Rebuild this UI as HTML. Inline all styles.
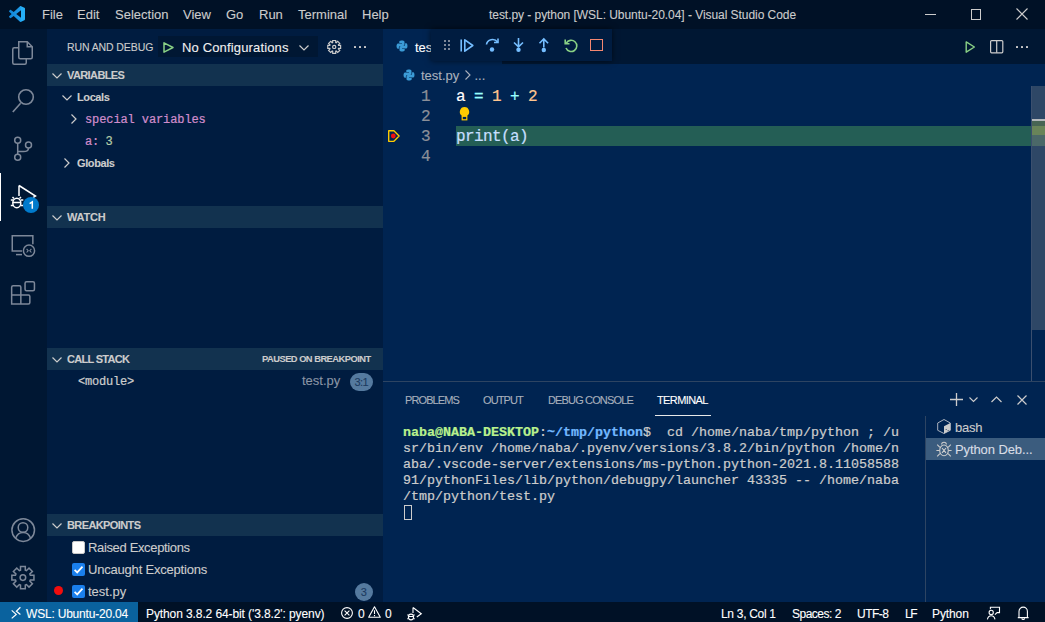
<!DOCTYPE html>
<html><head><meta charset="utf-8">
<style>
*{margin:0;padding:0;box-sizing:border-box}
html,body{width:1045px;height:622px;overflow:hidden;background:#001126;font-family:"Liberation Sans",sans-serif;color:#cccccc}
.a{position:absolute;white-space:pre;-webkit-text-stroke:0.1px currentColor}
.mono{font-family:"Liberation Mono",monospace;-webkit-text-stroke:0.22px currentColor}
svg{position:absolute;overflow:visible}
</style></head><body>
<div class="a" style="left:0px;top:0px;width:1045px;height:29px;background:#001126;"></div>
<div class="a" style="left:0px;top:29px;width:47px;height:573px;background:#001733;"></div>
<div class="a" style="left:47px;top:29px;width:336px;height:573px;background:#001c40;"></div>
<div class="a" style="left:383px;top:29px;width:662px;height:35px;background:#001733;"></div>
<div class="a" style="left:383px;top:29px;width:119px;height:35px;background:#002451;"></div>
<div class="a" style="left:383px;top:64px;width:662px;height:317px;background:#002451;"></div>
<div class="a" style="left:383px;top:381px;width:662px;height:1px;background:#2d4462;"></div>
<div class="a" style="left:383px;top:382px;width:662px;height:220px;background:#002451;"></div>
<div class="a" style="left:0px;top:602px;width:1045px;height:20px;background:#001126;"></div>
<div class="a" style="left:0px;top:602px;width:138px;height:20px;background:#0a629e;"></div>
<svg style="left:9px;top:6px" width="16" height="16" viewBox="0 0 100 100"><defs><linearGradient id="lg" x1="0" x2="1" y1="0" y2="0"><stop offset="0" stop-color="#1185d6"/><stop offset="0.7" stop-color="#1e9ae8"/><stop offset="0.75" stop-color="#25aef5"/><stop offset="1" stop-color="#25aef5"/></linearGradient></defs><path fill="url(#lg)" d="M96.46 10.8L75.86.87C73.48-.27 70.63.21 68.76 2.08L29.35 38.04 12.18 25.01c-1.6-1.21-3.84-1.11-5.33.24l-5.5 5c-1.81 1.65-1.81 4.5 0 6.15L16.24 50 1.35 63.6c-1.81 1.65-1.81 4.5 0 6.15l5.5 5c1.49 1.35 3.73 1.45 5.33.24l17.17-13.03 39.41 35.96c1.87 1.87 4.72 2.35 7.1 1.21l20.6-9.93c2.16-1.04 3.54-3.23 3.54-5.63V16.43c0-2.4-1.38-4.59-3.54-5.63zM75.02 72.7L45.11 50l29.91-22.7v45.4z"/></svg>
<div class="a" style="left:42px;top:8.00px;font-size:13px;line-height:13px;color:#cccccc;">File</div>
<div class="a" style="left:77px;top:8.00px;font-size:13px;line-height:13px;color:#cccccc;">Edit</div>
<div class="a" style="left:115px;top:8.00px;font-size:13px;line-height:13px;color:#cccccc;">Selection</div>
<div class="a" style="left:183px;top:8.00px;font-size:13px;line-height:13px;color:#cccccc;">View</div>
<div class="a" style="left:226px;top:8.00px;font-size:13px;line-height:13px;color:#cccccc;">Go</div>
<div class="a" style="left:259px;top:8.00px;font-size:13px;line-height:13px;color:#cccccc;">Run</div>
<div class="a" style="left:298px;top:8.00px;font-size:13px;line-height:13px;color:#cccccc;">Terminal</div>
<div class="a" style="left:362px;top:8.00px;font-size:13px;line-height:13px;color:#cccccc;">Help</div>
<div class="a" style="left:489px;top:8.84px;font-size:12px;line-height:12px;color:#cccccc;letter-spacing:-0.05px;">test.py - python [WSL: Ubuntu-20.04] - Visual Studio Code</div>
<div class="a" style="left:925px;top:14px;width:11px;height:1px;background:#cccccc;"></div>
<div class="a" style="left:970.5px;top:9px;width:10.5px;height:10.5px;background:transparent;border:1px solid #cccccc"></div>
<svg style="left:1016px;top:8px" width="12" height="12" viewBox="0 0 12 12"><path d="M0.5 0.5L11.5 11.5M11.5 0.5L0.5 11.5" stroke="#cccccc" stroke-width="1.1"/></svg>
<svg style="left:12px;top:41px" width="22" height="24" viewBox="0 0 22 24"><g fill="none" stroke="#7d8899" stroke-width="1.5"><path d="M6.75 0.75h8.5l5 5v10.5a1.5 1.5 0 0 1-1.5 1.5h-10.5a1.5 1.5 0 0 1-1.5-1.5z"/><path d="M15.25 0.75v5h5"/><path d="M6 6.75h-3.75a1.5 1.5 0 0 0-1.5 1.5v13.5a1.5 1.5 0 0 0 1.5 1.5h10.5a1.5 1.5 0 0 0 1.5-1.5v-4"/></g></svg>
<svg style="left:11px;top:88px" width="24" height="26" viewBox="0 0 24 26"><g fill="none" stroke="#7d8899" stroke-width="1.6"><circle cx="15" cy="9" r="7.3"/><path d="M9.6 15.2L1.8 24"/></g></svg>
<svg style="left:12px;top:135px" width="20" height="26" viewBox="0 0 20 26"><g fill="none" stroke="#7d8899" stroke-width="1.5"><circle cx="5.7" cy="5.3" r="3"/><circle cx="5.7" cy="22.2" r="3"/><circle cx="16.5" cy="9.9" r="3"/><path d="M5.7 8.3v10.9M16.5 12.9c0 3-2 3.6-5 3.6h-5.8"/></g></svg>
<div class="a" style="left:0px;top:173px;width:1px;height:48px;background:#ffffff;"></div>
<svg style="left:10px;top:184px" width="28" height="26" viewBox="0 0 28 26"><g fill="none" stroke="#ffffff" stroke-width="1.5"><path d="M9 1.5v10.5M9 1.5l16.5 10.5-2.5 1.6"/><ellipse cx="6.8" cy="19" rx="4" ry="4.8"/><path d="M2.8 18.5h8M0.8 16h2.5M0.8 21.5h2.5M10.8 16h2.5M10.8 21.5h2.5M4 14.5l-1.5-1.5M9.5 14.5l1.5-1.5"/></g></svg>
<div class="a" style="left:23px;top:196.5px;width:16.4px;height:16.4px;background:#007acc;border-radius:50%"></div>
<svg style="left:23px;top:196px" width="17" height="17" viewBox="0 0 17 17"><path d="M6.6 7.6L9.3 5.9V12.8" fill="none" stroke="#ffffff" stroke-width="1.5"/></svg>
<svg style="left:0px;top:221px" width="48" height="48" viewBox="0 0 48 48"><g fill="none" stroke="#7d8899" stroke-width="1.5"><path d="M22 30.1H12.25V14.85H32.85V23.2"/><path d="M16 33.6H22"/><circle cx="29" cy="29.7" r="5.6"/><path d="M26.6 27.9l1.6 1.8-1.6 1.8M31.4 27.9l-1.6 1.8 1.6 1.8" stroke-width="1.1"/></g></svg>
<svg style="left:0px;top:269px" width="48" height="48" viewBox="0 0 48 48"><g fill="none" stroke="#7d8899" stroke-width="1.5"><path d="M20.85 25.9V18.25a1.5 1.5 0 0 0-1.5-1.5h-6.2a1.5 1.5 0 0 0-1.5 1.5v16.7h16.7a1.5 1.5 0 0 0 1.5-1.5v-6a1.5 1.5 0 0 0-1.5-1.5H11.65M20.85 25.9v9.05"/><rect x="25.05" y="12.65" width="9.4" height="9.2" rx="1.5"/></g></svg>
<svg style="left:11px;top:518px" width="25" height="25" viewBox="0 0 25 25"><g fill="none" stroke="#7d8899" stroke-width="1.5"><circle cx="12.2" cy="12.1" r="11.3"/><circle cx="12" cy="9.5" r="4.8"/><path d="M4.6 20.2c1.2-3.2 4-5.6 7.5-5.6s6.3 2.4 7.5 5.6"/></g></svg>
<svg style="left:10px;top:565px" width="26" height="26" viewBox="0 0 26 26"><g fill="none" stroke="#7d8899" stroke-width="1.5"><polygon points="10.50,5.18 10.50,1.56 15.30,1.56 15.30,5.18 16.45,5.66 19.01,3.09 22.41,6.49 19.84,9.05 20.32,10.20 23.94,10.20 23.94,15.00 20.32,15.00 19.84,16.15 22.41,18.71 19.01,22.11 16.45,19.54 15.30,20.02 15.30,23.64 10.50,23.64 10.50,20.02 9.35,19.54 6.79,22.11 3.39,18.71 5.96,16.15 5.48,15.00 1.86,15.00 1.86,10.20 5.48,10.20 5.96,9.05 3.39,6.49 6.79,3.09 9.35,5.66" stroke-linejoin="miter"/><circle cx="12.9" cy="12.6" r="2.8"/></g></svg>
<div class="a" style="left:67px;top:42.11px;font-size:10.5px;line-height:10.5px;color:#cccccc;letter-spacing:-0.1px;">RUN AND DEBUG</div>
<div class="a" style="left:158px;top:36px;width:160px;height:21px;background:#001733;"></div>
<svg style="left:163px;top:42px" width="11" height="11" viewBox="0 0 11 11"><path d="M1 0.8L10 5.5 1 10.2z" fill="none" stroke="#89d185" stroke-width="1.5" stroke-linejoin="round"/></svg>
<div class="a" style="left:182px;top:41.00px;font-size:13px;line-height:13px;color:#f0f0f0;letter-spacing:0.15px;">No Configurations</div>
<svg style="left:299px;top:44.5px" width="10" height="6" viewBox="0 0 10 6"><path d="M0.5 0.5L5 5 9.5 0.5" fill="none" stroke="#cccccc" stroke-width="1.2"/></svg>
<svg style="left:327px;top:40px" width="15" height="15" viewBox="0 0 15 15"><g fill="none" stroke="#cccccc" stroke-width="1.15"><polygon points="5.70,2.55 5.70,0.47 8.70,0.47 8.70,2.55 9.21,2.76 10.68,1.29 12.81,3.42 11.34,4.89 11.55,5.40 13.63,5.40 13.63,8.40 11.55,8.40 11.34,8.91 12.81,10.38 10.68,12.51 9.21,11.04 8.70,11.25 8.70,13.33 5.70,13.33 5.70,11.25 5.19,11.04 3.72,12.51 1.59,10.38 3.06,8.91 2.85,8.40 0.77,8.40 0.77,5.40 2.85,5.40 3.06,4.89 1.59,3.42 3.72,1.29 5.19,2.76" stroke-linejoin="miter"/><circle cx="7.2" cy="6.9" r="1.6"/></g></svg>
<div class="a" style="left:354px;top:46px;width:2px;height:2px;background:#cccccc;border-radius:0.5px"></div>
<div class="a" style="left:359px;top:46px;width:2px;height:2px;background:#cccccc;border-radius:0.5px"></div>
<div class="a" style="left:364px;top:46px;width:2px;height:2px;background:#cccccc;border-radius:0.5px"></div>
<div class="a" style="left:47px;top:64px;width:336px;height:22px;background:#12324f;"></div>
<svg style="left:52px;top:72.5px" width="10" height="6" viewBox="0 0 10 6"><path d="M0.5 0.5L5 5 9.5 0.5" fill="none" stroke="#cccccc" stroke-width="1.2"/></svg>
<div class="a" style="left:67px;top:69.99px;font-size:11px;line-height:11px;color:#cccccc;font-weight:bold;letter-spacing:-0.6px;">VARIABLES</div>
<svg style="left:61.5px;top:94.8px" width="10" height="6" viewBox="0 0 10 6"><path d="M0.5 0.5L5 5 9.5 0.5" fill="none" stroke="#cccccc" stroke-width="1.2"/></svg>
<div class="a" style="left:77px;top:91.69px;font-size:11px;line-height:11px;color:#cccccc;font-weight:bold;letter-spacing:-0.4px;">Locals</div>
<svg style="left:71.3px;top:114px" width="6" height="10" viewBox="0 0 6 10"><path d="M0.5 0.5L5 5 0.5 9.5" fill="none" stroke="#cccccc" stroke-width="1.2"/></svg>
<div class="a mono" style="left:85px;top:113.80px;font-size:12px;line-height:12px;color:#d08ccb;letter-spacing:-0.1px;">special variables</div>
<div class="a mono" style="left:85px;top:135.80px;font-size:12px;line-height:12px;color:#d08ccb;letter-spacing:-0.1px;">a:</div>
<div class="a mono" style="left:105.5px;top:135.80px;font-size:12px;line-height:12px;color:#b5cea8;">3</div>
<svg style="left:63.5px;top:158.2px" width="6" height="10" viewBox="0 0 6 10"><path d="M0.5 0.5L5 5 0.5 9.5" fill="none" stroke="#cccccc" stroke-width="1.2"/></svg>
<div class="a" style="left:77px;top:157.69px;font-size:11px;line-height:11px;color:#cccccc;font-weight:bold;letter-spacing:-0.4px;">Globals</div>
<div class="a" style="left:47px;top:206px;width:336px;height:22px;background:#12324f;"></div>
<svg style="left:52px;top:214.5px" width="10" height="6" viewBox="0 0 10 6"><path d="M0.5 0.5L5 5 9.5 0.5" fill="none" stroke="#cccccc" stroke-width="1.2"/></svg>
<div class="a" style="left:67px;top:211.99px;font-size:11px;line-height:11px;color:#cccccc;font-weight:bold;letter-spacing:-0.2px;">WATCH</div>
<div class="a" style="left:47px;top:348px;width:336px;height:22px;background:#12324f;"></div>
<svg style="left:52px;top:356.5px" width="10" height="6" viewBox="0 0 10 6"><path d="M0.5 0.5L5 5 9.5 0.5" fill="none" stroke="#cccccc" stroke-width="1.2"/></svg>
<div class="a" style="left:67px;top:353.99px;font-size:11px;line-height:11px;color:#cccccc;font-weight:bold;letter-spacing:-0.7px;">CALL STACK</div>
<div class="a" style="left:262px;top:355.13px;font-size:9.3px;line-height:9.3px;color:#cccccc;font-weight:bold;letter-spacing:-0.5px;">PAUSED ON BREAKPOINT</div>
<div class="a mono" style="left:78px;top:375.80px;font-size:12px;line-height:12px;color:#cccccc;letter-spacing:-0.2px;">&lt;module&gt;</div>
<div class="a" style="left:302px;top:374.00px;font-size:13px;line-height:13px;color:#8b95a5;">test.py</div>
<div class="a" style="left:350px;top:373px;width:23px;height:18px;background:#557a9f;border-radius:9px"></div>
<div class="a" style="left:354.5px;top:376.69px;font-size:11px;line-height:11px;color:#1c3a60;letter-spacing:-0.6px;">3:1</div>
<div class="a" style="left:47px;top:514px;width:336px;height:22px;background:#12324f;"></div>
<svg style="left:52px;top:522.5px" width="10" height="6" viewBox="0 0 10 6"><path d="M0.5 0.5L5 5 9.5 0.5" fill="none" stroke="#cccccc" stroke-width="1.2"/></svg>
<div class="a" style="left:67px;top:519.99px;font-size:11px;line-height:11px;color:#cccccc;font-weight:bold;letter-spacing:-0.6px;">BREAKPOINTS</div>
<div class="a" style="left:72px;top:541px;width:13px;height:13px;background:#ffffff;border-radius:2px;border:1px solid #c8c8c8"></div>
<div class="a" style="left:88px;top:540.70px;font-size:13px;line-height:13px;color:#cccccc;letter-spacing:-0.35px;">Raised Exceptions</div>
<div class="a" style="left:72px;top:563px;width:13px;height:13px;background:#1a7fec;border-radius:2px"></div>
<svg style="left:72px;top:563px" width="13" height="13" viewBox="0 0 13 13"><path d="M2.6 6.8L5.2 9.4 10.5 3.6" fill="none" stroke="#ffffff" stroke-width="1.7"/></svg>
<div class="a" style="left:88px;top:562.60px;font-size:13px;line-height:13px;color:#cccccc;letter-spacing:-0.2px;">Uncaught Exceptions</div>
<div class="a" style="left:54.2px;top:586.2px;width:9px;height:9px;background:#f20d0d;border-radius:50%"></div>
<div class="a" style="left:72px;top:585px;width:13px;height:13px;background:#1a7fec;border-radius:2px"></div>
<svg style="left:72px;top:585px" width="13" height="13" viewBox="0 0 13 13"><path d="M2.6 6.8L5.2 9.4 10.5 3.6" fill="none" stroke="#ffffff" stroke-width="1.7"/></svg>
<div class="a" style="left:88px;top:584.60px;font-size:13px;line-height:13px;color:#cccccc;">test.py</div>
<div class="a" style="left:355px;top:583px;width:18px;height:18px;background:#557a9f;border-radius:9px"></div>
<div class="a" style="left:360.7px;top:586.69px;font-size:11px;line-height:11px;color:#1c3a60;">3</div>
<svg style="left:396px;top:40px" width="12" height="12" viewBox="0 0 12 12"><g><path d="M5.9 0.5c-2.7 0-2.6 1.2-2.6 1.2v1.3h2.7v.4H2.2S.5 3.2.5 6c0 2.8 1.5 2.7 1.5 2.7h.9V7.4s-.1-1.5 1.5-1.5h2.6s1.5 0 1.5-1.4V2s.2-1.5-2.6-1.5z" fill="#3b9bd6"/><path d="M6.1 11.5c2.7 0 2.6-1.2 2.6-1.2V9H6v-.4h3.8s1.7.2 1.7-2.6c0-2.8-1.5-2.7-1.5-2.7h-.9v1.3s.1 1.5-1.5 1.5H5s-1.5 0-1.5 1.4V10s-.2 1.5 2.6 1.5z" fill="#3b9bd6"/></g></svg>
<div class="a" style="left:415px;top:41.00px;font-size:13px;line-height:13px;color:#ffffff;">tes</div>
<div class="a" style="left:431px;top:29px;width:181px;height:32px;background:#001c40;box-shadow:0 0 6px rgba(0,0,0,0.6)"></div>
<div class="a" style="left:443.5px;top:40px;width:2px;height:2px;background:#7d8899;"></div>
<div class="a" style="left:443.5px;top:44px;width:2px;height:2px;background:#7d8899;"></div>
<div class="a" style="left:443.5px;top:48px;width:2px;height:2px;background:#7d8899;"></div>
<div class="a" style="left:448px;top:40px;width:2px;height:2px;background:#7d8899;"></div>
<div class="a" style="left:448px;top:44px;width:2px;height:2px;background:#7d8899;"></div>
<div class="a" style="left:448px;top:48px;width:2px;height:2px;background:#7d8899;"></div>
<svg style="left:460px;top:39px" width="14" height="13" viewBox="0 0 14 13"><g fill="none" stroke="#75beff" stroke-width="1.6"><path d="M1.2 0.5v12"/><path d="M4.8 0.8L12.8 6.5 4.8 12.2z" stroke-linejoin="round"/></g></svg>
<svg style="left:485px;top:38px" width="15" height="14" viewBox="0 0 15 14"><g fill="none" stroke="#75beff" stroke-width="1.6"><path d="M1.5 6.5a6 5.5 0 0 1 11-2.5"/><path d="M13 0.5v4h-4"/></g><circle cx="7" cy="11.5" r="2.2" fill="#75beff"/></svg>
<svg style="left:513px;top:38px" width="11" height="14" viewBox="0 0 11 14"><g fill="none" stroke="#75beff" stroke-width="1.6"><path d="M5.5 0v8.5M1 4.5l4.5 4.3 4.5-4.3"/></g><circle cx="5.5" cy="11.7" r="2.2" fill="#75beff"/></svg>
<svg style="left:539px;top:38px" width="10" height="14" viewBox="0 0 10 14"><g fill="none" stroke="#75beff" stroke-width="1.6"><path d="M4.8 1v8.5M0.5 5.2l4.3-4.3 4.3 4.3"/></g><circle cx="4.8" cy="12" r="2.2" fill="#75beff"/></svg>
<svg style="left:564px;top:39px" width="14" height="13" viewBox="0 0 14 13"><g fill="none" stroke="#89d185" stroke-width="1.6"><path d="M2.3 4.2a5.6 5.6 0 1 1-.3 4.8"/><path d="M1.2 0.5v4.3h4.3"/></g></svg>
<div class="a" style="left:590px;top:39px;width:13px;height:12.3px;background:transparent;border:1.6px solid #f48771"></div>
<svg style="left:965px;top:41px" width="11" height="12" viewBox="0 0 11 12"><path d="M1.2 0.9L9.4 6 1.2 11.2z" fill="none" stroke="#89d185" stroke-width="1.4" stroke-linejoin="round"/></svg>
<svg style="left:990px;top:40px" width="14" height="13" viewBox="0 0 14 13"><g fill="none" stroke="#cccccc" stroke-width="1.2"><rect x="0.6" y="0.6" width="12.2" height="12.2" rx="1"/><path d="M6.7 0.6v12.2"/></g></svg>
<div class="a" style="left:1016px;top:46px;width:2px;height:2px;background:#cccccc;border-radius:0.5px"></div>
<div class="a" style="left:1021px;top:46px;width:2px;height:2px;background:#cccccc;border-radius:0.5px"></div>
<div class="a" style="left:1026px;top:46px;width:2px;height:2px;background:#cccccc;border-radius:0.5px"></div>
<svg style="left:403px;top:69px" width="12" height="12" viewBox="0 0 12 12"><g><path d="M5.9 0.5c-2.7 0-2.6 1.2-2.6 1.2v1.3h2.7v.4H2.2S.5 3.2.5 6c0 2.8 1.5 2.7 1.5 2.7h.9V7.4s-.1-1.5 1.5-1.5h2.6s1.5 0 1.5-1.4V2s.2-1.5-2.6-1.5z" fill="#3b9bd6"/><path d="M6.1 11.5c2.7 0 2.6-1.2 2.6-1.2V9H6v-.4h3.8s1.7.2 1.7-2.6c0-2.8-1.5-2.7-1.5-2.7h-.9v1.3s.1 1.5-1.5 1.5H5s-1.5 0-1.5 1.4V10s-.2 1.5 2.6 1.5z" fill="#3b9bd6"/></g></svg>
<div class="a" style="left:421px;top:69.00px;font-size:13px;line-height:13px;color:#a9b1bd;">test.py</div>
<svg style="left:464.5px;top:70px" width="6" height="10" viewBox="0 0 6 10"><path d="M0.5 0.5L5 5 0.5 9.5" fill="none" stroke="#a9b1bd" stroke-width="1.1"/></svg>
<div class="a" style="left:474.5px;top:69.00px;font-size:13px;line-height:13px;color:#a9b1bd;">...</div>
<div class="a mono" style="left:421px;top:88.74px;font-size:16px;line-height:16px;color:#8b8f98;">1</div>
<div class="a mono" style="left:421px;top:108.74px;font-size:16px;line-height:16px;color:#8b8f98;">2</div>
<div class="a mono" style="left:421px;top:128.74px;font-size:16px;line-height:16px;color:#8b8f98;">3</div>
<div class="a mono" style="left:421px;top:148.74px;font-size:16px;line-height:16px;color:#8b8f98;">4</div>
<div class="a" style="left:456px;top:126px;width:575px;height:20px;background:#245e55;"></div>
<div class="a mono" style="left:456px;top:88.74px;font-size:16px;line-height:16px;color:#ffffff;">a</div>
<div class="a mono" style="left:474px;top:88.74px;font-size:16px;line-height:16px;color:#99ffff;">=</div>
<div class="a mono" style="left:492px;top:88.74px;font-size:16px;line-height:16px;color:#ffc58f;">1</div>
<div class="a mono" style="left:510px;top:88.74px;font-size:16px;line-height:16px;color:#99ffff;">+</div>
<div class="a mono" style="left:528px;top:88.74px;font-size:16px;line-height:16px;color:#ffc58f;">2</div>
<div class="a mono" style="left:456px;top:128.74px;font-size:16px;line-height:16px;color:#c6dfff;letter-spacing:-0.6px;">print(a)</div>
<svg style="left:459px;top:106px" width="11" height="15" viewBox="0 0 11 15"><path d="M5.5 1.1a4.7 4.7 0 0 0-2.6 8.6v0.8h5.2v-0.8a4.7 4.7 0 0 0-2.6-8.6z" fill="#ffcc00"/><rect x="3.2" y="10.2" width="4.6" height="3.6" fill="none" stroke="#ffcc00" stroke-width="1.2"/></svg>
<svg style="left:388px;top:130px" width="12" height="12" viewBox="0 0 12 12"><path d="M0.7 0.7h5.2l5.2 5.3-5.2 5.3h-5.2z" fill="none" stroke="#ffcc00" stroke-width="1.35" stroke-linejoin="round"/><circle cx="5.3" cy="6" r="2.4" fill="#f01010"/></svg>
<div class="a" style="left:1031px;top:86px;width:1px;height:295px;background:#3b4f6e;"></div>
<div class="a" style="left:1032px;top:86px;width:13px;height:244px;background:#2e4766;"></div>
<div class="a" style="left:1032px;top:119px;width:13px;height:2px;background:#b4b8bc;"></div>
<div class="a" style="left:1032px;top:121px;width:13px;height:5px;background:#476454;"></div>
<div class="a" style="left:1032px;top:126px;width:13px;height:9px;background:#698459;"></div>
<div class="a" style="left:1032px;top:135px;width:13px;height:11px;background:#4b6868;"></div>
<div class="a" style="left:405px;top:394.69px;font-size:11px;line-height:11px;color:#a8b0bc;letter-spacing:-0.9px;">PROBLEMS</div>
<div class="a" style="left:483px;top:394.69px;font-size:11px;line-height:11px;color:#a8b0bc;letter-spacing:-0.9px;">OUTPUT</div>
<div class="a" style="left:548px;top:394.69px;font-size:11px;line-height:11px;color:#a8b0bc;letter-spacing:-0.85px;">DEBUG CONSOLE</div>
<div class="a" style="left:657px;top:394.69px;font-size:11px;line-height:11px;color:#ffffff;letter-spacing:-0.6px;">TERMINAL</div>
<div class="a" style="left:655px;top:415px;width:56px;height:1px;background:#e8e8e8;"></div>
<svg style="left:950px;top:393px" width="13" height="13" viewBox="0 0 13 13"><path d="M6.5 0v13M0 6.5h13" stroke="#cccccc" stroke-width="1.3"/></svg>
<svg style="left:969px;top:397px" width="9" height="6" viewBox="0 0 9 6"><path d="M0.5 0.5L4.5 4.5 8.5 0.5" fill="none" stroke="#cccccc" stroke-width="1.1"/></svg>
<svg style="left:991px;top:396px" width="11" height="7" viewBox="0 0 11 7"><path d="M0.5 6L5.5 1 10.5 6" fill="none" stroke="#cccccc" stroke-width="1.2"/></svg>
<svg style="left:1017px;top:395px" width="10" height="10" viewBox="0 0 10 10"><path d="M0.5 0.5L9.5 9.5M9.5 0.5L0.5 9.5" stroke="#cccccc" stroke-width="1.2"/></svg>
<div class="a mono" style="left:403px;top:425.78px;font-size:13.33px;line-height:13.33px;color:#b9f18d;font-weight:bold;">naba@NABA-DESKTOP</div>
<div class="a mono" style="left:539px;top:425.78px;font-size:13.33px;line-height:13.33px;color:#cccccc;">:</div>
<div class="a mono" style="left:547px;top:425.78px;font-size:13.33px;line-height:13.33px;color:#72b8ff;font-weight:bold;">~/tmp/python</div>
<div class="a mono" style="left:643px;top:425.78px;font-size:13.33px;line-height:13.33px;color:#cccccc;">$  cd /home/naba/tmp/python ; /u</div>
<div class="a mono" style="left:403px;top:441.78px;font-size:13.33px;line-height:13.33px;color:#cccccc;">sr/bin/env /home/naba/.pyenv/versions/3.8.2/bin/python /home/n</div>
<div class="a mono" style="left:403px;top:457.78px;font-size:13.33px;line-height:13.33px;color:#cccccc;">aba/.vscode-server/extensions/ms-python.python-2021.8.11058588</div>
<div class="a mono" style="left:403px;top:473.78px;font-size:13.33px;line-height:13.33px;color:#cccccc;">91/pythonFiles/lib/python/debugpy/launcher 43335 -- /home/naba</div>
<div class="a mono" style="left:403px;top:489.78px;font-size:13.33px;line-height:13.33px;color:#cccccc;">/tmp/python/test.py</div>
<div class="a" style="left:403.5px;top:504.5px;width:8px;height:15.5px;background:transparent;border:1px solid #cccccc"></div>
<div class="a" style="left:925px;top:416px;width:1px;height:186px;background:#2d4462;"></div>
<div class="a" style="left:926px;top:438px;width:119px;height:22px;background:#3b5c7e;"></div>
<svg style="left:937px;top:419px" width="14" height="15" viewBox="0 0 14 15"><g fill="none" stroke="#a9b1bd" stroke-width="1"><path d="M7 0.5L13.3 4v7.3L7 14.5 0.7 11.3V4z"/></g><path d="M7 7.3L13.3 4v7.3L7 14.5z" fill="#cccccc"/><path d="M8.6 10.5h1.4M10.6 11.5h1.3" stroke="#5a6a80" stroke-width="0.9"/></svg>
<div class="a" style="left:955px;top:421.00px;font-size:13px;line-height:13px;color:#cccccc;letter-spacing:-0.2px;">bash</div>
<svg style="left:936px;top:441px" width="16" height="16" viewBox="0 0 16 16"><g fill="none" stroke="#cccccc" stroke-width="1.1"><path d="M5.6 3.6a2.4 2.4 0 0 1 4.8 0"/><ellipse cx="8" cy="9.4" rx="4.3" ry="5.4"/><path d="M6 7l4 4.8M10 7l-4 4.8M3.9 6.3L1.2 3.6M12.1 6.3l2.7-2.7M3.6 9.5H0.4M12.4 9.5h3.2M3.9 12.6L1.2 15.3M12.1 12.6l2.7 2.7"/></g></svg>
<div class="a" style="left:955px;top:443.00px;font-size:13px;line-height:13px;color:#d8dde5;letter-spacing:-0.1px;">Python Deb...</div>
<svg style="left:10px;top:606px" width="12" height="14" viewBox="0 0 12 14"><path d="M1.7 4.4L6.2 8.4 1.7 12.4M10.4 1.3L6.4 5.2 10.4 8.5" fill="none" stroke="#ffffff" stroke-width="1.2"/></svg>
<div class="a" style="left:26px;top:608.04px;font-size:12px;line-height:12px;color:#ffffff;letter-spacing:-0.2px;">WSL: Ubuntu-20.04</div>
<div class="a" style="left:146px;top:608.04px;font-size:12px;line-height:12px;color:#ffffff;letter-spacing:-0.1px;">Python 3.8.2 64-bit (&#x27;3.8.2&#x27;: pyenv)</div>
<svg style="left:341px;top:607px" width="12" height="12" viewBox="0 0 12 12"><g fill="none" stroke="#ffffff" stroke-width="1.1"><circle cx="6" cy="6" r="5.4"/><path d="M3.6 3.6l4.8 4.8M8.4 3.6l-4.8 4.8"/></g></svg>
<div class="a" style="left:358px;top:608.04px;font-size:12px;line-height:12px;color:#ffffff;">0</div>
<svg style="left:368px;top:605.5px" width="13" height="12" viewBox="0 0 13 12"><g fill="none" stroke="#ffffff" stroke-width="1.1" stroke-linejoin="round"><path d="M6.5 0.8L12.3 11.2H0.7z"/><path d="M6.5 4.3v3.8M6.5 9v1.2"/></g></svg>
<div class="a" style="left:385px;top:608.04px;font-size:12px;line-height:12px;color:#ffffff;">0</div>
<svg style="left:406px;top:606px" width="17" height="15" viewBox="0 0 17 15"><g fill="none" stroke="#ffffff" stroke-width="1.1"><path d="M7 1.5v5.5M7 1.5l8.3 6.3-4.5 3.2"/><ellipse cx="5" cy="11" rx="2.6" ry="2.9"/><path d="M2.4 10.5h5.2M1.2 9h1.2M1.2 12.8h1.2M7.6 9h1.2M7.6 12.8h1.2"/></g></svg>
<div class="a" style="left:721px;top:608.04px;font-size:12px;line-height:12px;color:#ffffff;letter-spacing:-0.3px;">Ln 3, Col 1</div>
<div class="a" style="left:792px;top:608.04px;font-size:12px;line-height:12px;color:#ffffff;letter-spacing:-0.5px;">Spaces: 2</div>
<div class="a" style="left:857px;top:608.04px;font-size:12px;line-height:12px;color:#ffffff;letter-spacing:-0.5px;">UTF-8</div>
<div class="a" style="left:905px;top:608.04px;font-size:12px;line-height:12px;color:#ffffff;letter-spacing:-1.3px;">LF</div>
<div class="a" style="left:932px;top:608.04px;font-size:12px;line-height:12px;color:#ffffff;letter-spacing:-0.1px;">Python</div>
<svg style="left:985px;top:605px" width="15" height="15" viewBox="0 0 15 15"><g fill="none" stroke="#ffffff" stroke-width="1.1"><path d="M5.4 4.2V2.2H14.5V7.6H12.1L9.9 9.6"/><circle cx="6.2" cy="7.4" r="2.1"/><path d="M2.4 14.3c0.5-2.2 1.9-3.6 3.8-3.6s3.3 1.4 3.8 3.6"/></g></svg>
<svg style="left:1017px;top:605px" width="14" height="15" viewBox="0 0 14 15"><g fill="none" stroke="#ffffff" stroke-width="1.1"><path d="M0.8 12.6H11.6M2 12.6V6.4a4.2 4.3 0 0 1 8.4 0V12.6"/><path d="M4.9 13.2a1.3 1.3 0 0 0 2.6 0"/></g></svg>
</body></html>
